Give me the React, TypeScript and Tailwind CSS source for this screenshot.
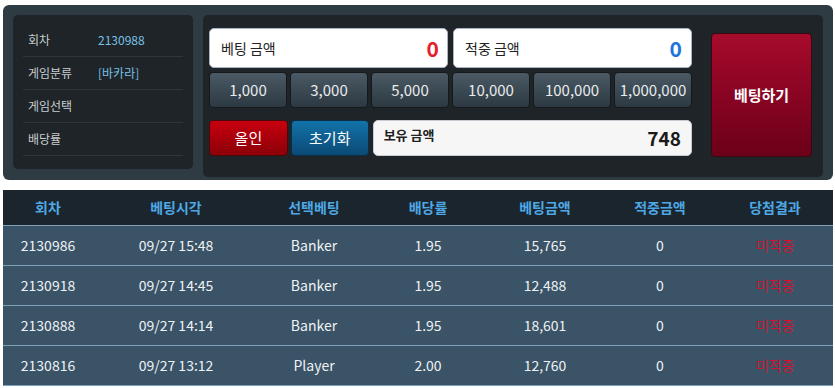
import React from "react";

const chips = ["1,000", "3,000", "5,000", "10,000", "100,000", "1,000,000"];
const rows = [
  ["2130986", "09/27 15:48", "Banker", "1.95", "15,765", "0", "미적중"],
  ["2130918", "09/27 14:45", "Banker", "1.95", "12,488", "0", "미적중"],
  ["2130888", "09/27 14:14", "Banker", "1.95", "18,601", "0", "미적중"],
  ["2130816", "09/27 13:12", "Player", "2.00", "12,760", "0", "미적중"],
];
const heads = ["회차", "베팅시각", "선택베팅", "배당률", "베팅금액", "적중금액", "당첨결과"];

export default function App() {
  return (
    <div
      className="w-[835px] h-[388px] bg-white overflow-hidden"
      style={{ fontFamily: '"Noto Sans CJK KR", "Noto Sans", sans-serif' }}
    >
      <div className="pt-[5px] pl-[3px] pr-[2px]">
        <div className="bg-[#2e3b43] rounded-[6px] pl-[10px] pt-[10px] pr-[10px] pb-[3px] flex gap-[10px] h-[175px]">
          {/* left info */}
          <div className="w-[180px] h-[154px] bg-[#1e2427] rounded-[5px] px-[10px] pt-[9px]">
            {[
              ["회차", "2130988"],
              ["게임분류", "[바카라]"],
              ["게임선택", ""],
              ["배당률", ""],
            ].map(([l, v]) => (
              <div key={l} className="h-[33px] border-b border-[#2f3639] flex items-center text-[12px]">
                <span className="w-[75px] pl-[5px] text-[#c9cdd0]">{l}</span>
                <span className="text-[#79c2e6]">{v}</span>
              </div>
            ))}
          </div>
          {/* middle */}
          <div className="flex-1 bg-[#1e2427] rounded-[5px] pl-[6px] pt-[13px] pr-[11px] flex">
            <div className="w-[483px] flex flex-col">
              <div className="flex gap-[5px]">
                <div className="w-[239px] h-[40px] bg-white border border-[#aab4c4] rounded-[5px] flex items-center justify-between pl-[11px] pr-[8px]">
                  <span className="text-[14px] text-[#222]">베팅 금액</span>
                  <span className="text-[21px] font-bold text-[#e5202a] leading-none">0</span>
                </div>
                <div className="w-[239px] h-[40px] bg-white border border-[#aab4c4] rounded-[5px] flex items-center justify-between pl-[11px] pr-[9px]">
                  <span className="text-[14px] text-[#222]">적중 금액</span>
                  <span className="text-[21px] font-bold text-[#1e74dc] leading-none">0</span>
                </div>
              </div>
              <div className="flex gap-[3px] mt-[4px]">
                {chips.map((c) => (
                  <div
                    key={c}
                    className="w-[78px] h-[36px] rounded-[4px] border border-[#15191b] bg-gradient-to-b from-[#4b5a65] to-[#2c3942] flex items-center justify-center text-[15px] text-[#e9ecee]"
                  >
                    {c}
                  </div>
                ))}
              </div>
              <div className="flex gap-[3px] mt-[12px]">
                <div className="w-[79px] h-[36px] rounded-[4px] border border-[#4a0a0c] bg-gradient-to-b from-[#c8000f] to-[#8c0008] flex items-center justify-center text-[15px] text-white">
                  올인
                </div>
                <div className="w-[78px] h-[36px] rounded-[4px] border border-[#0a2f48] bg-gradient-to-b from-[#1273a9] to-[#0b4a76] flex items-center justify-center text-[15px] text-white">
                  초기화
                </div>
                <div className="w-[320px] h-[36px] rounded-[5px] bg-[#f6f6f6] border border-[#c8ccd2] ml-[1px] flex items-center justify-between pl-[10px] pr-[10px]">
                  <span className="text-[13px] font-bold text-[#222] -mt-[7px]">보유 금액</span>
                  <span className="text-[19px] font-bold text-[#1a1a1a]">748</span>
                </div>
              </div>
            </div>
            <div className="ml-[19px] mt-[5px] w-[101px] h-[124px] rounded-[4px] border border-[#3a0810] bg-gradient-to-b from-[#a70b2c] to-[#6c0019] flex items-center justify-center text-[15px] font-bold text-white">
              베팅하기
            </div>
          </div>
        </div>
      </div>
      {/* table */}
      <div className="mt-[10px] ml-[3px] w-[830px]">
        <div className="grid grid-cols-[90px_166px_110px_118px_116px_114px_116px] h-[36px] bg-[#1b252d] items-center border-b border-[#7fa1ba]">
          {heads.map((h) => (
            <div key={h} className="text-center text-[14px] font-bold text-[#4ea8e6]">
              {h}
            </div>
          ))}
        </div>
        {rows.map((r, i) => (
          <div
            key={i}
            className="grid grid-cols-[90px_166px_110px_118px_116px_114px_116px] h-[40px] bg-[#3a5366] items-center border-b border-[#7fa1ba]"
          >
            {r.map((c, j) => (
              <div
                key={j}
                className={
                  j === 6
                    ? "text-center text-[14px] text-[#d0132e]"
                    : "text-center text-[14px] text-[#eef2f5]"
                }
              >
                {c}
              </div>
            ))}
          </div>
        ))}
      </div>
    </div>
  );
}
